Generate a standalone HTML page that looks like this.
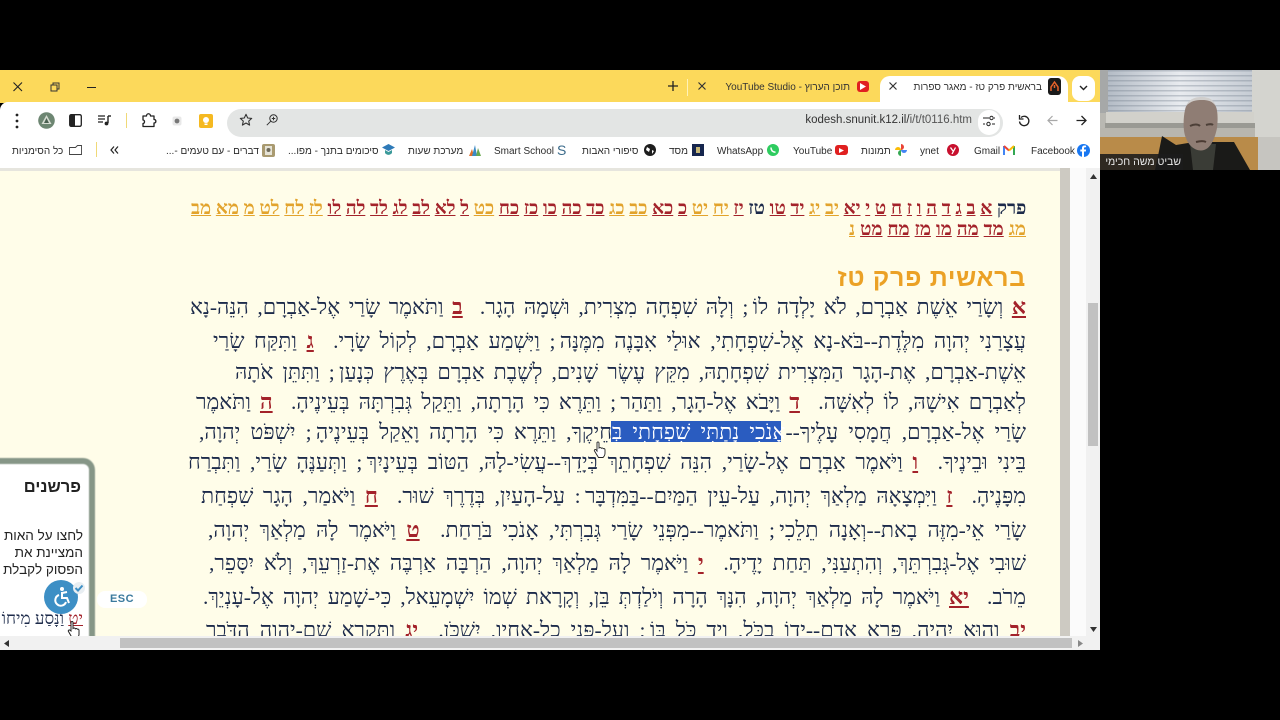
<!DOCTYPE html>
<html lang="he"><head><meta charset="utf-8"><title>בראשית פרק טז</title>
<style>
html,body{margin:0;padding:0;background:#000;width:1280px;height:720px;overflow:hidden}
*{box-sizing:border-box}
.a{position:absolute}
#stage{position:absolute;left:0;top:0;width:1280px;height:720px;overflow:hidden;background:#000;font-family:"Liberation Sans",sans-serif}
.bm{position:absolute;top:144.500px;font-size:10px;line-height:13px;color:#2c2c2c;white-space:nowrap;direction:rtl}
.l{position:absolute;height:30px;line-height:30px;font-family:"Liberation Serif",serif;font-size:21.5px;color:#1c2a4a;direction:rtl;text-align:justify;text-align-last:justify;white-space:nowrap;overflow:visible}
.l b{color:#a3222a;text-decoration:underline;font-weight:bold;font-size:22px}
.n{position:absolute;height:22px;line-height:22px;font-family:"Liberation Serif",serif;font-size:18.7px;font-weight:bold;direction:rtl;text-align:justify;text-align-last:justify;white-space:nowrap;color:#1c2a4a}
.n u{color:#a3222a}.n s{text-decoration:underline;color:#e2a32c}
svg{position:absolute;overflow:visible}
</style></head><body><div id="stage">

<!-- tab strip -->
<div class="a" style="left:0;top:70px;width:1100px;height:33px;background:#fcd95b"></div>
<!-- window controls -->
<svg style="left:12px;top:81px" width="12" height="12" viewBox="0 0 12 12"><path d="M1.500 1.500L10 10M10 1.500L1.500 10" stroke="#222" stroke-width="1.100" fill="none"/></svg>
<svg style="left:50px;top:82px" width="10" height="10" viewBox="0 0 10 10"><path d="M1 3h6v6H1zM3 3V1h6v6H7" stroke="#333" fill="none"/></svg>
<div class="a" style="left:87px;top:87px;width:9px;height:1px;background:#222"></div>
<!-- tabs -->
<svg style="left:668px;top:81px" width="10" height="10" viewBox="0 0 10 10"><path d="M5 0v10M0 5h10" stroke="#222" stroke-width="1.300"/></svg>
<div class="a" style="left:687px;top:79px;width:1px;height:17px;background:#fff2b8"></div>
<svg style="left:698px;top:82px" width="8" height="8" viewBox="0 0 8 8"><path d="M.5.5l7 7M7.500.5l-7 7" stroke="#333" stroke-width="1.200"/></svg>
<div class="a" style="left:728px;top:80.500px;font-size:10px;line-height:13px;color:#333;white-space:nowrap;direction:rtl;width:122px;text-align:right">תוכן הערוץ - YouTube Studio</div>
<div class="a" style="left:857px;top:81px;width:12px;height:11px;background:#e02020;border-radius:3px"></div>
<svg style="left:860px;top:83px" width="6" height="7" viewBox="0 0 6 7"><path d="M0 0l6 3.500L0 7z" fill="#fff"/></svg>
<div class="a" style="left:880px;top:76px;width:188px;height:27px;background:#fff;border-radius:10px 10px 0 0"></div>
<svg style="left:889px;top:82px" width="8" height="8" viewBox="0 0 8 8"><path d="M.5.5l7 7M7.500.5l-7 7" stroke="#333" stroke-width="1.200"/></svg>
<div class="a" style="left:905px;top:80.500px;width:137px;font-size:10px;line-height:13px;color:#333;white-space:nowrap;direction:rtl;text-align:right;overflow:hidden">בראשית פרק טז - מאגר ספרות</div>
<div class="a" style="left:1048px;top:78px;width:13px;height:17px;background:#1a1a1a;border-radius:3px"></div>
<svg style="left:1049px;top:81px" width="11" height="11" viewBox="0 0 11 11"><path d="M2 10V6l3.500-5L9 6v4M5.500 4v3" stroke="#e8622a" stroke-width="1.500" fill="none"/></svg>
<div class="a" style="left:1072px;top:76px;width:23px;height:25px;background:#fff;border-radius:8px"></div>
<svg style="left:1079px;top:85px" width="9" height="6" viewBox="0 0 9 6"><path d="M1 1l3.500 3.500L8 1" stroke="#222" stroke-width="1.400" fill="none"/></svg>

<!-- toolbar -->
<div class="a" style="left:0;top:102px;width:1100px;height:66px;background:#fff;border-radius:8px 0 0 0"></div>
<div class="a" style="left:0;top:168px;width:1100px;height:3px;background:#e6e5de"></div>
<svg style="left:15px;top:113px" width="4" height="16" viewBox="0 0 4 16"><circle cx="2" cy="2" r="1.400" fill="#222"/><circle cx="2" cy="8" r="1.400" fill="#222"/><circle cx="2" cy="14" r="1.400" fill="#222"/></svg>
<svg style="left:38px;top:112px" width="17" height="17" viewBox="0 0 17 17"><circle cx="8.500" cy="8.500" r="8.300" fill="#6d8672"/><path d="M8.500 3l5 9h-10z" fill="#d6dcd2"/><path d="M8.500 6l2.500 5H6z" fill="#4b6152"/></svg>
<svg style="left:69px;top:114px" width="13" height="13" viewBox="0 0 13 13"><rect x=".7" y=".7" width="11.600" height="11.600" rx="1.500" fill="#fff" stroke="#222" stroke-width="1.300"/><rect x="1" y="1" width="5" height="11" fill="#222"/></svg>
<svg style="left:98px;top:115px" width="13" height="11" viewBox="0 0 13 11"><path d="M0 1h7M0 4h7M0 7h5" stroke="#222" stroke-width="1.200"/><path d="M10 1v7" stroke="#222" stroke-width="1.400"/><path d="M10 1h3" stroke="#222" stroke-width="1.400"/><circle cx="8.500" cy="8.500" r="1.900" fill="#222"/></svg>
<div class="a" style="left:126px;top:113px;width:1px;height:15px;background:#f0d978"></div>
<svg style="left:142px;top:113px" width="14" height="15" viewBox="0 0 14 15"><path d="M1 3h3.500c0-3 4-3 4 0H12v3.500c2.500 0 2.500 3.500 0 3.500v3.500H1v-3c2 0 2-3.500 0-3.500z" fill="#fff" stroke="#222" stroke-width="1.300" stroke-linejoin="round"/></svg>
<svg style="left:172px;top:116px" width="10" height="10" viewBox="0 0 10 10"><rect x=".5" y=".5" width="9" height="9" rx="2" fill="#e8e8e8"/><circle cx="5" cy="5" r="2.400" fill="#777"/></svg>
<div class="a" style="left:199px;top:114px;width:14px;height:14px;background:#f5b921;border-radius:2px"></div>
<svg style="left:201px;top:116px" width="10" height="10" viewBox="0 0 10 10"><circle cx="5" cy="4" r="3" fill="#fff"/><rect x="3.500" y="7.500" width="3" height="1.500" fill="#fff"/></svg>
<div class="a" style="left:227px;top:109px;width:776px;height:28px;background:#e3e5e4;border-radius:14px"></div>
<svg style="left:239px;top:113px" width="14" height="14" viewBox="0 0 14 14"><path d="M7 1.300l1.700 3.700 4 .4-3 2.700.9 4L7 10l-3.600 2.100.9-4-3-2.700 4-.4z" fill="none" stroke="#333" stroke-width="1.100" stroke-linejoin="round"/></svg>
<svg style="left:266px;top:114px" width="12" height="12" viewBox="0 0 12 12"><circle cx="7.500" cy="4.500" r="3.700" fill="none" stroke="#333"/><path d="M4.800 7.200L.8 11.200M5.800 4.500h3.400M7.500 2.800v3.400" stroke="#333"/></svg>
<div class="a" style="left:772px;top:113px;width:200px;text-align:right;font-size:11.500px;line-height:15px;color:#333;white-space:nowrap">kodesh.snunit.k12.il/<span style="color:#555">i/t/t0116.htm</span></div>
<div class="a" style="left:978px;top:110px;width:22px;height:25px;background:#fff;border-radius:12px"></div>
<svg style="left:983px;top:115px" width="12" height="12" viewBox="0 0 12 12"><path d="M0 3h6M0 9h2M9 9h3M11 3h1" stroke="#222" stroke-width="1.100"/><circle cx="8.500" cy="3" r="1.700" fill="none" stroke="#222"/><circle cx="5.500" cy="9" r="1.700" fill="none" stroke="#222"/></svg>
<svg style="left:1018px;top:114px" width="12" height="13" viewBox="0 0 12 13"><path d="M3 3.500A4.700 4.700 0 1 1 1.500 7.500" fill="none" stroke="#222" stroke-width="1.300"/><path d="M1.500 1v4h4" fill="none" stroke="#222" stroke-width="1.300"/></svg>
<svg style="left:1047px;top:115px" width="11" height="11" viewBox="0 0 11 11"><path d="M10.500 5.500H1M5.500 1L1 5.500 5.500 10" fill="none" stroke="#a8a8a8" stroke-width="1.200"/></svg>
<svg style="left:1076px;top:115px" width="11" height="11" viewBox="0 0 11 11"><path d="M.5 5.500H10M5.500 1L10 5.500 5.500 10" fill="none" stroke="#222" stroke-width="1.300"/></svg>

<!-- bookmarks -->
<div class="bm" style="left:12px">כל הסימניות</div>
<svg style="left:69px;top:145px" width="13" height="10" viewBox="0 0 13 10"><path d="M.5 2.500h6l2-2h4v9H.5z" fill="#fff" stroke="#444" stroke-width=".9"/></svg>
<div class="a" style="left:96px;top:142px;width:1px;height:15px;background:#f0d978"></div>
<svg style="left:110px;top:146px" width="9" height="8" viewBox="0 0 9 8"><path d="M4 .5L1 4l3 3.500M8 .5L5 4l3 3.500" fill="none" stroke="#222" stroke-width="1.200"/></svg>
<div class="bm" style="left:166px">דברים - עם טעמים -...</div>
<svg style="left:262px;top:144px" width="13" height="13" viewBox="0 0 13 13"><rect width="13" height="13" rx="2" fill="#a99a70"/><rect x="3" y="2" width="7" height="9" fill="#e6e3d6"/><circle cx="6.500" cy="6" r="2" fill="#6e6a5a"/></svg>
<div class="bm" style="left:288px">סיכומים בתנך - מפו...</div>
<svg style="left:382px;top:144px" width="13" height="12" viewBox="0 0 13 12"><path d="M6.500 0L13 3.500 6.500 7 0 3.500z" fill="#2e7ab8"/><path d="M3 6v3c2 2.500 5 2.500 7 0V6L6.500 8z" fill="#3c9a9a"/></svg>
<div class="bm" style="left:408px">מערכת שעות</div>
<svg style="left:468px;top:144px" width="13" height="13" viewBox="0 0 13 13"><path d="M1 12L4 5l2 7z" fill="#e0702a"/><path d="M4 12l3-11 2 11z" fill="#3b8ac4"/><path d="M8 12l2-8 3 8z" fill="#6aa84f"/></svg>
<div class="bm" style="left:494px;direction:ltr">Smart School</div>
<div class="a" style="left:557px;top:143px;font-size:14px;line-height:15px;color:#3a6a8a">S</div>
<div class="bm" style="left:582px">סיפורי האבות</div>
<svg style="left:644px;top:144px" width="12" height="12" viewBox="0 0 12 12"><circle cx="6" cy="6" r="6" fill="#1d1d1d"/><path d="M3 3l3 2-1 3-3-2zM8 6l2 1-2 3z" fill="#fff"/></svg>
<div class="bm" style="left:669px">מסד</div>
<div class="a" style="left:692px;top:144px;width:12px;height:12px;background:#16264e"></div>
<div class="a" style="left:696px;top:147px;width:4px;height:6px;background:#c7b878"></div>
<div class="bm" style="left:717px;direction:ltr">WhatsApp</div>
<svg style="left:767px;top:144px" width="12" height="12" viewBox="0 0 12 12"><circle cx="6" cy="6" r="6" fill="#2ecc5f"/><path d="M4 3.500c0 3 1.500 4.500 4.500 4.800" fill="none" stroke="#fff" stroke-width="1.500"/></svg>
<div class="bm" style="left:793px;direction:ltr">YouTube</div>
<div class="a" style="left:835px;top:145px;width:13px;height:10px;background:#e02020;border-radius:3px"></div>
<svg style="left:839px;top:147.500px" width="5" height="5" viewBox="0 0 5 5"><path d="M0 0l5 2.500L0 5z" fill="#fff"/></svg>
<div class="bm" style="left:861px">תמונות</div>
<svg style="left:895px;top:144px" width="12" height="12" viewBox="0 0 12 12"><path d="M6 6V0a3 3 0 0 1 0 6z" fill="#ea4335"/><path d="M6 6h6a3 3 0 0 1-6 0z" fill="#4285f4"/><path d="M6 6v6a3 3 0 0 1 0-6z" fill="#34a853"/><path d="M6 6H0a3 3 0 0 1 6 0z" fill="#fbbc05"/></svg>
<div class="bm" style="left:920px;direction:ltr">ynet</div>
<svg style="left:947px;top:144px" width="12" height="12" viewBox="0 0 12 12"><circle cx="6" cy="6" r="6" fill="#c8102e"/><path d="M3.500 3.500L6 7M8.500 3.500L5 10" stroke="#fff" stroke-width="1.300" fill="none"/></svg>
<div class="bm" style="left:974px;direction:ltr">Gmail</div>
<svg style="left:1003px;top:145px" width="12" height="10" viewBox="0 0 12 10"><path d="M1 10V1" stroke="#4285f4" stroke-width="2"/><path d="M11 10V1" stroke="#34a853" stroke-width="2"/><path d="M1 1l5 4.500" stroke="#ea4335" stroke-width="2"/><path d="M11 1L6 5.500" stroke="#fbbc05" stroke-width="2"/></svg>
<div class="bm" style="left:1031px;direction:ltr">Facebook</div>
<svg style="left:1077px;top:144px" width="13" height="13" viewBox="0 0 13 13"><circle cx="6.500" cy="6.500" r="6.500" fill="#1877f2"/><path d="M7 13V7.500h1.800l.3-2H7V4.300c0-.6.300-1 1-1h1.100V1.600C8.500 1.500 8 1.500 7.500 1.500 6 1.500 5 2.500 5 4v1.500H3.300v2H5V13z" fill="#fff"/></svg>

<!-- page -->
<div class="a" style="left:0;top:171px;width:1060px;height:465px;background:#fffde9"></div>
<div class="a" style="left:1060px;top:168px;width:10px;height:468px;background:#cdcac2"></div>
<div class="a" style="left:1070px;top:168px;width:17px;height:468px;background:#fbfbfb"></div>
<div class="a" style="left:1086px;top:168px;width:14px;height:468px;background:#f1f1f1"></div>
<div class="a" style="left:1088px;top:303px;width:10px;height:143px;background:#c1c1c1"></div>
<svg style="left:1090px;top:174px" width="7" height="5" viewBox="0 0 7 5"><path d="M3.500 0L7 5H0z" fill="#333"/></svg>
<svg style="left:1090px;top:627px" width="7" height="5" viewBox="0 0 7 5"><path d="M3.500 5L7 0H0z" fill="#333"/></svg>

<div class="n" style="left:191px;top:198px;width:835px">פרק <u>א</u> <u>ב</u> <u>ג</u> <u>ד</u> <u>ה</u> <u>ו</u> <u>ז</u> <u>ח</u> <u>ט</u> <u>י</u> <u>יא</u> <s>יב</s> <s>יג</s> <u>יד</u> <u>טו</u> טז <u>יז</u> <s>יח</s> <s>יט</s> <u>כ</u> <u>כא</u> <s>כב</s> <s>כג</s> <u>כד</u> <u>כה</u> <u>כו</u> <u>כז</u> <u>כח</u> <s>כט</s> <u>ל</u> <u>לא</u> <u>לב</u> <u>לג</u> <u>לד</u> <u>לה</u> <u>לו</u> <s>לז</s> <s>לח</s> <s>לט</s> <s>מ</s> <s>מא</s> <s>מב</s></div>
<div class="n" style="left:849px;top:219px;width:177px"><s>מג</s> <u>מד</u> <u>מה</u> <u>מו</u> <u>מז</u> <u>מח</u> <u>מט</u> <s>נ</s></div>

<div class="a" style="left:700px;top:262px;width:326px;text-align:right;direction:rtl;font-family:'Liberation Sans',sans-serif;font-weight:bold;font-size:25px;line-height:32px;color:#eba125;letter-spacing:.7px">בראשית פרק טז</div>

<div class="l" style="left:190px;top:292px;width:836px"><b>א</b> וְשָׂרַי אֵשֶׁת אַבְרָם, לֹא יָלְדָה לוֹ&#8201;; וְלָהּ שִׁפְחָה מִצְרִית, וּשְׁמָהּ הָגָר. &nbsp;<b>ב</b> וַתֹּאמֶר שָׂרַי אֶל-אַבְרָם, הִנֵּה-נָא</div>
<div class="l" style="left:213px;top:326px;width:813px">עֲצָרַנִי יְהוָה מִלֶּדֶת--בֹּא-נָא אֶל-שִׁפְחָתִי, אוּלַי אִבָּנֶה מִמֶּנָּה&#8201;; וַיִּשְׁמַע אַבְרָם, לְקוֹל שָׂרָי. &nbsp;<b>ג</b> וַתִּקַּח שָׂרַי</div>
<div class="l" style="left:235px;top:357px;width:791px">אֵשֶׁת-אַבְרָם, אֶת-הָגָר הַמִּצְרִית שִׁפְחָתָהּ, מִקֵּץ עֶשֶׂר שָׁנִים, לְשֶׁבֶת אַבְרָם בְּאֶרֶץ כְּנָעַן&#8201;; וַתִּתֵּן אֹתָהּ</div>
<div class="l" style="left:196px;top:387px;width:830px">לְאַבְרָם אִישָׁהּ, לוֹ לְאִשָּׁה. &nbsp;<b>ד</b> וַיָּבֹא אֶל-הָגָר, וַתַּהַר&#8201;; וַתֵּרֶא כִּי הָרָתָה, וַתֵּקַל גְּבִרְתָּהּ בְּעֵינֶיהָ. &nbsp;<b>ה</b> וַתֹּאמֶר</div>
<div class="a" style="left:611px;top:421px;width:170px;height:21px;background:#2a5cc0"></div>
<div class="l" style="left:199px;top:417px;width:827px">שָׂרַי אֶל-אַבְרָם, חֲמָסִי עָלֶיךָ--<span style="color:#fff">אָנֹכִי נָתַתִּי שִׁפְחָתִי בְּ</span>חֵיקֶךָ, וַתֵּרֶא כִּי הָרָתָה וָאֵקַל בְּעֵינֶיהָ&#8201;; יִשְׁפֹּט יְהוָה,</div>
<div class="l" style="left:188px;top:447px;width:838px">בֵּינִי וּבֵינֶיךָ. &nbsp;<b>ו</b> וַיֹּאמֶר אַבְרָם אֶל-שָׂרַי, הִנֵּה שִׁפְחָתֵךְ בְּיָדֵךְ--עֲשִׂי-לָהּ, הַטּוֹב בְּעֵינָיִךְ&#8201;; וַתְּעַנֶּהָ שָׂרַי, וַתִּבְרַח</div>
<div class="l" style="left:201px;top:481px;width:825px">מִפָּנֶיהָ. &nbsp;<b>ז</b> וַיִּמְצָאָהּ מַלְאַךְ יְהוָה, עַל-עֵין הַמַּיִם--בַּמִּדְבָּר&#8201;: עַל-הָעַיִן, בְּדֶרֶךְ שׁוּר. &nbsp;<b>ח</b> וַיֹּאמַר, הָגָר שִׁפְחַת</div>
<div class="l" style="left:208px;top:515px;width:818px">שָׂרַי אֵי-מִזֶּה בָאת--וְאָנָה תֵלֵכִי&#8201;; וַתֹּאמֶר--מִפְּנֵי שָׂרַי גְּבִרְתִּי, אָנֹכִי בֹּרַחַת. &nbsp;<b>ט</b> וַיֹּאמֶר לָהּ מַלְאַךְ יְהוָה,</div>
<div class="l" style="left:209px;top:548px;width:817px">שׁוּבִי אֶל-גְּבִרְתֵּךְ, וְהִתְעַנִּי, תַּחַת יָדֶיהָ. &nbsp;<b>י</b> וַיֹּאמֶר לָהּ מַלְאַךְ יְהוָה, הַרְבָּה אַרְבֶּה אֶת-זַרְעֵךְ, וְלֹא יִסָּפֵר,</div>
<div class="l" style="left:203px;top:582px;width:823px">מֵרֹב. &nbsp;<b>יא</b> וַיֹּאמֶר לָהּ מַלְאַךְ יְהוָה, הִנָּךְ הָרָה וְיֹלַדְתְּ בֵּן, וְקָרָאת שְׁמוֹ יִשְׁמָעֵאל, כִּי-שָׁמַע יְהוָה אֶל-עָנְיֵךְ.</div>
<div class="l" style="left:206px;top:615px;width:820px"><b>יב</b> וְהוּא יִהְיֶה, פֶּרֶא אָדָם--יָדוֹ בַכֹּל, וְיַד כֹּל בּוֹ&#8201;; וְעַל-פְּנֵי כָל-אֶחָיו, יִשְׁכֹּן. &nbsp;<b>יג</b> וַתִּקְרָא שֵׁם-יְהוָה הַדֹּבֵר</div>

<!-- cursor on text -->
<svg style="left:593px;top:441px" width="14" height="18" viewBox="0 0 14 18"><path d="M4 1.500c1-1 2-.5 2 .5v5c1-.8 2-.5 2.300.3.800-.6 1.700-.3 2 .4.800-.3 1.700 0 1.700 1v3.500c0 2-1 3.300-2 4.300H5.500L1.500 10c-.7-1 .5-2 1.500-1.300L4 10z" fill="#fff" stroke="#222" stroke-width=".9"/></svg>

<!-- commentary panel -->
<div class="a" style="left:-10px;top:458px;width:105px;height:190px;background:#fff;border:6px solid #869687;border-bottom:0;border-radius:0 12px 0 0;filter:blur(.5px)"></div>
<div class="a" style="left:0;top:477px;width:81px;text-align:right;direction:rtl;font-weight:bold;font-size:16.500px;line-height:20px;color:#222">פרשנים</div>
<div class="a" style="left:-20px;top:527px;width:103px;text-align:right;direction:rtl;font-size:13.500px;line-height:17px;color:#222;white-space:nowrap">לחצו על האות<br>המציינת את<br>הפסוק לקבלת</div>
<div class="a" style="left:-20px;top:610px;width:103px;text-align:right;direction:rtl;font-family:'Liberation Serif',serif;font-size:17px;line-height:18px;color:#1c2a4a;white-space:nowrap;height:26px;overflow:hidden"><span style="color:#a3222a;text-decoration:underline">יט</span> וַנָּסַע מִיחוֹ</div>
<svg style="left:67px;top:620px" width="16" height="20" viewBox="0 0 16 20"><path d="M4 2c1-1 2-.5 2 .5v6c1-.8 2-.5 2.300.3.800-.6 1.700-.3 2 .4.800-.3 1.700 0 1.700 1v4c0 2-1 3.300-2 4.300H5.500L1.500 11.500c-.7-1 .5-2 1.500-1.300L4 11z" fill="#fff" stroke="#222" stroke-width="1"/></svg>
<div class="a" style="left:44px;top:580px;width:34px;height:34px;background:#3d8fc5;border-radius:50%"></div>
<svg style="left:50px;top:586px" width="22" height="22" viewBox="0 0 22 22"><circle cx="12" cy="3" r="2" fill="#fff"/><path d="M12 6v6h5l2 5" fill="none" stroke="#fff" stroke-width="2"/><path d="M9 9a5.500 5.500 0 1 0 7 7" fill="none" stroke="#fff" stroke-width="2"/><path d="M12 7l5-1" stroke="#fff" stroke-width="2"/></svg>
<svg style="left:72px;top:582px" width="14" height="12" viewBox="0 0 14 12"><circle cx="7" cy="6" r="6" fill="#e8eef2"/><path d="M3.500 6l2.500 2.500L10.500 3.500" fill="none" stroke="#3d8fc5" stroke-width="2"/></svg>
<div class="a" style="left:97px;top:591px;width:50px;height:17px;background:#fff;border-radius:8px;text-align:center;font-weight:bold;font-size:11px;line-height:17px;color:#3b7a9e;letter-spacing:.5px">ESC</div>

<!-- horizontal scrollbar -->
<div class="a" style="left:0;top:636px;width:1100px;height:14px;background:#f1f1f1"></div>
<div class="a" style="left:120px;top:638px;width:952px;height:10px;background:#c1c1c1"></div>
<svg style="left:4px;top:640px" width="5" height="7" viewBox="0 0 5 7"><path d="M0 3.500L5 0v7z" fill="#333"/></svg>
<svg style="left:1078px;top:640px" width="5" height="7" viewBox="0 0 5 7"><path d="M5 3.500L0 0v7z" fill="#888"/></svg>

<!-- webcam -->
<svg style="left:1100px;top:70px" width="180" height="100" viewBox="0 0 180 100">
<defs><linearGradient id="bl" x1="0" x2="1" y1="0" y2="0"><stop offset="0" stop-color="#b4bcc6"/><stop offset=".5" stop-color="#e8ebef"/><stop offset="1" stop-color="#c6ccd4"/></linearGradient>
<pattern id="sl" width="10" height="5" patternUnits="userSpaceOnUse"><rect width="10" height="1.500" fill="#6f7a88" fill-opacity=".35"/></pattern></defs>
<rect width="180" height="100" fill="#b9b8b2"/>
<rect x="152" width="28" height="100" fill="#d4d4cf"/>
<rect x="8" width="144" height="43" fill="url(#bl)"/><rect x="8" width="144" height="43" fill="url(#sl)"/>
<rect x="0" width="8" height="43" fill="#a6a8a8"/>
<rect x="6" y="42" width="148" height="11" fill="#d2d1cb"/>
<rect x="5" y="53" width="150" height="5" fill="#9a9a94"/>
<rect x="0" y="58" width="155" height="10" fill="#b8b6af"/>
<rect x="0" y="67" width="158" height="33" fill="#b98b49"/>
<rect x="158" y="67" width="22" height="33" fill="#c6c5c0"/>
<path d="M62 66l14 9 18-3 22 0 18 0 16 28H55l3-14z" fill="#1a1a18"/>
<path d="M90 74l26 0-3 26H93z" fill="#3a3c36"/>
<path d="M85 40c-2 9-2 22 1 28 3 9 11 14 18 12 7-2 11-12 13-22 1-8 1-19-2-23-5-6-12-8-19-6-6 2-10 5-11 11z" fill="#8f7d74"/>
<path d="M86 36c3-7 9-9 16-9 7 0 12 3 14 9-4-5-8-6-14-6-7 0-11 1-16 6z" fill="#d0cecc"/>
<path d="M90 56c4-2 8-2 10 0M106 55c3-1 6-1 7 0" stroke="#4d4038" stroke-width="2" fill="none"/>
<path d="M96 72c4-1 8-1 10 0" stroke="#4a3a32" stroke-width="2" fill="none"/>
<rect x="0" y="84" width="83" height="16" fill="#1b1b1b" fill-opacity=".88"/>
</svg>
<div class="a" style="left:1103px;top:155px;width:78px;direction:rtl;text-align:right;font-size:10.500px;line-height:14px;color:#e6e6e6;white-space:nowrap">שביט משה חכימי</div>

</div></body></html>
